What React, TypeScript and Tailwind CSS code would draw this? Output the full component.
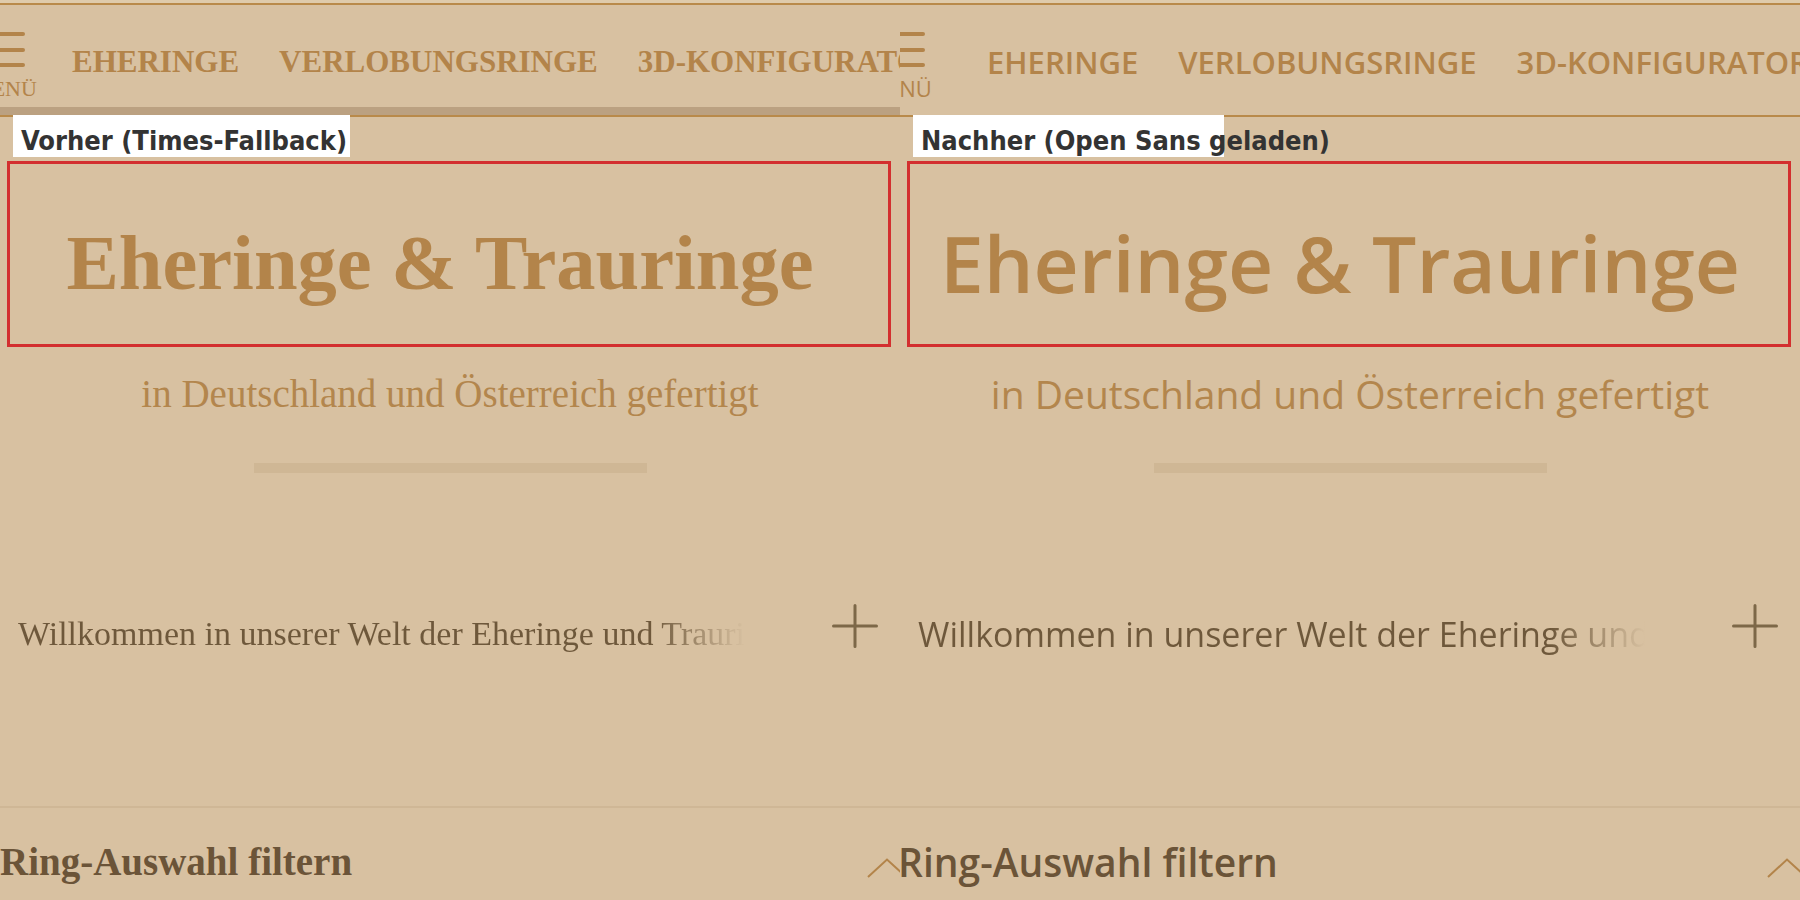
import React from 'react';

type Variant = {
  font: string;
  navWeight: string;
  navOffset: string;
  menuText: string;
  titleWeight: string;
  headWeight: string;
  headOffset: string;
  band: string;
  label: string;
  labelWidth: string;
};

const VARIANTS: Record<'serif' | 'sans', Variant> = {
  serif: {
    font: "font-['Liberation_Serif','Times_New_Roman',serif]",
    navWeight: 'font-bold',
    navOffset: 'ml-[35px]',
    menuText: 'pt-[11px]',
    titleWeight: 'font-bold',
    headWeight: 'font-bold',
    headOffset: 'ml-0',
    band: 'bg-[#bba181]',
    label: 'Vorher (Times-Fallback)',
    labelWidth: 'w-[337px]',
  },
  sans: {
    font: "font-['Open_Sans',sans-serif]",
    navWeight: 'font-semibold',
    navOffset: 'ml-[50px]',
    menuText: 'pt-[10px] mr-[10px]',
    titleWeight: 'font-semibold',
    headWeight: 'font-semibold',
    headOffset: '-ml-[2px]',
    band: 'bg-transparent',
    label: 'Nachher (Open Sans geladen)',
    labelWidth: 'w-[311px]',
  },
};

const NAV_ITEMS = ['EHERINGE', 'VERLOBUNGSRINGE', '3D-KONFIGURATOR', 'SCHMUCK'];

const Panel: React.FC<{ kind: 'serif' | 'sans' }> = ({ kind }) => {
  const v = VARIANTS[kind];

  return (
    <div className={`relative h-[900px] w-[900px] shrink-0 overflow-hidden bg-[#d8c1a1] ${v.font}`}>
      <div className="h-[3px] bg-[#dfcbab]" />
      <div className="h-[2px] bg-[#b98a4a]" />

      {/* navigation */}
      <nav className="flex h-[102px] items-start whitespace-nowrap text-[#b3844a]">
        <div className="-ml-[28px] flex w-[65px] shrink-0 flex-col items-center pt-[27px]">
          <span className="h-[4px] w-[40px] rounded-full bg-[#b3844a]" />
          <span className="mt-[12px] h-[4px] w-[40px] rounded-full bg-[#b3844a]" />
          <span className="mt-[11px] h-[4px] w-[40px] rounded-full bg-[#b3844a]" />
          <span className={`${v.menuText} text-[22px] leading-[22px]`}>MENÜ</span>
        </div>
        <ul className={`flex shrink-0 gap-[40px] pt-[37px] ${v.navOffset}`}>
          {NAV_ITEMS.map((item) => (
            <li key={item} className={`shrink-0 text-[31px] leading-[40px] ${v.navWeight}`}>
              {item}
            </li>
          ))}
        </ul>
      </nav>
      <div className={`h-[8px] ${v.band}`} />
      <div className="h-[2px] bg-[#b98a4a]" />

      {/* label */}
      <div
        className={`relative -mt-[2px] ml-[13px] h-[42px] ${v.labelWidth} bg-white pl-[8px] pt-[12px] whitespace-nowrap font-['DejaVu_Sans_Condensed','DejaVu_Sans',sans-serif] font-stretch-condensed text-[27px] leading-[27px] font-bold text-[#333]`}
      >
        {v.label}
      </div>

      {/* title box */}
      <div className="mt-[4px] ml-[7px] h-[186px] w-[884px] border-[3px] border-[#d32f2f]">
        <h1
          className={`mt-[54px] h-[90px] pr-[18px] text-center text-[78.5px] leading-[90px] whitespace-nowrap text-[#b3844a] ${v.titleWeight}`}
        >
          Eheringe &amp; Trauringe
        </h1>
      </div>

      <p className="mt-[22px] h-[50px] text-center text-[39px] leading-[50px] whitespace-nowrap text-[#b3864d]">
        in Deutschland und Österreich gefertigt
      </p>

      <div className="mx-auto mt-[44px] h-[10px] w-[393px] bg-[#cfb795]" />

      {/* intro accordion */}
      <div className="mt-[131px] flex items-start">
        <div className="ml-[18px] h-[60px] w-[727px] shrink-0 overflow-hidden bg-gradient-to-r from-[#6e583b] from-[87%] to-transparent bg-clip-text text-[34px] leading-[60px] whitespace-nowrap text-transparent">
          Willkommen in unserer Welt der Eheringe und Trauringe
        </div>
        <svg className="ml-[87px] shrink-0" width="46" height="44" viewBox="0 0 46 44" fill="none">
          <path d="M23 1.5V42.5M1.5 22H44.5" stroke="#7d6848" strokeWidth="3" strokeLinecap="round" />
        </svg>
      </div>

      <div className="mt-[142px] h-[2px] bg-[#cfb796]" />

      {/* filter heading */}
      <div className="mt-[29px] flex w-[907px] items-start justify-between">
        <h2
          className={`h-[50px] text-[39px] leading-[50px] whitespace-nowrap text-[#6b5438] ${v.headWeight} ${v.headOffset}`}
        >
          Ring-Auswahl filtern
        </h2>
        <svg className="mt-[21px] shrink-0" width="40" height="20" viewBox="0 0 40 20" fill="none">
          <polyline points="1,19 20,1.5 39,19" stroke="#b3844a" strokeWidth="2" />
        </svg>
      </div>
    </div>
  );
};

const App: React.FC = () => {
  return (
    <div className="flex h-[900px] w-[1800px] overflow-hidden bg-[#d8c1a1]">
      <Panel kind="serif" />
      <Panel kind="sans" />
    </div>
  );
};

export default App;
